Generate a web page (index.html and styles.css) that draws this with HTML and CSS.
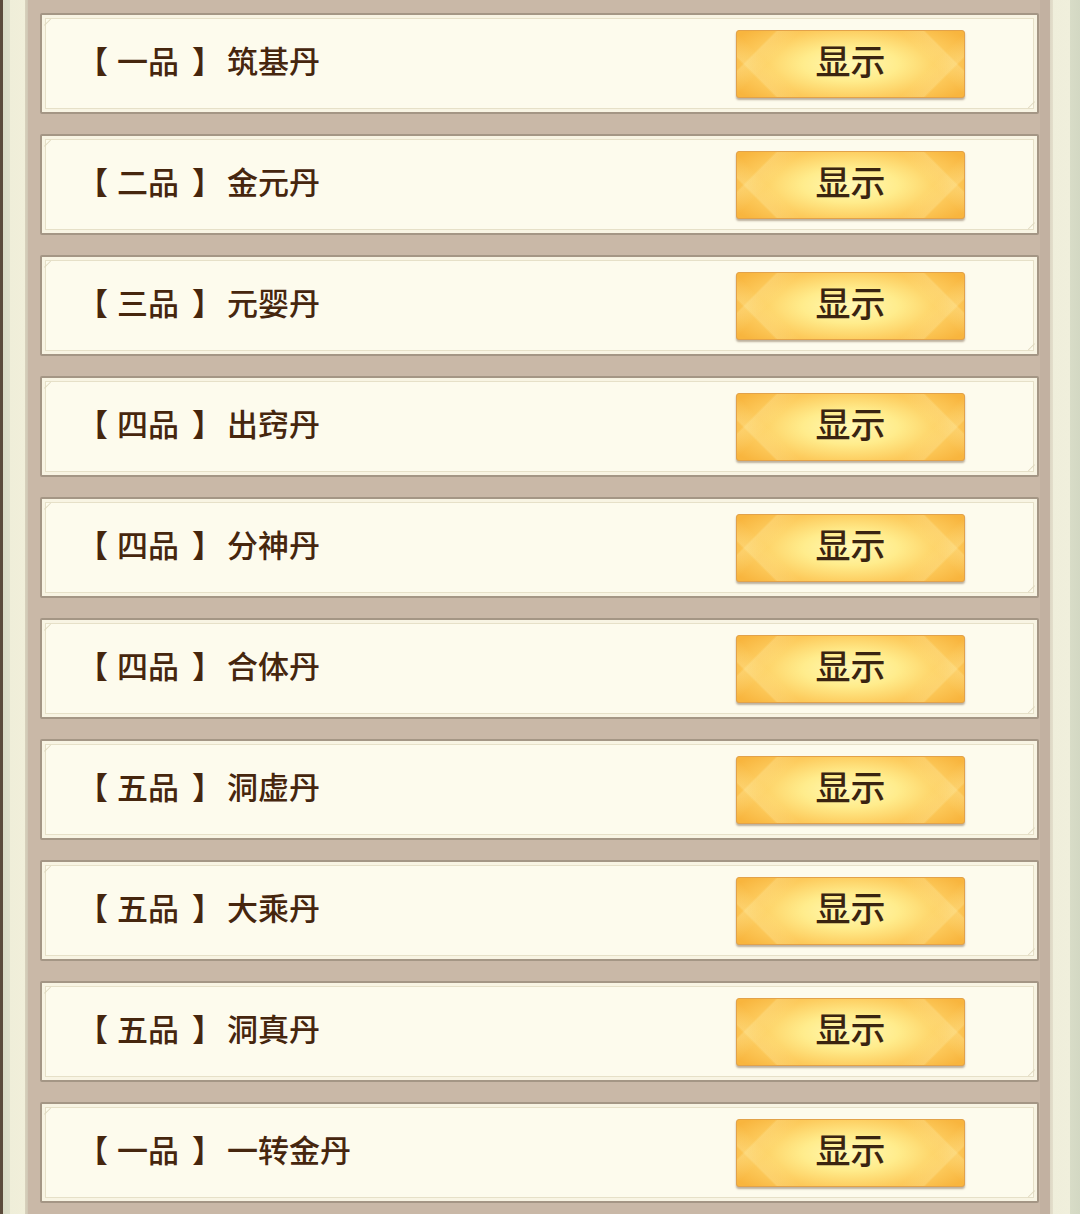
FILE: index.html
```html
<!DOCTYPE html>
<html lang="zh">
<head>
<meta charset="utf-8">
<link rel="stylesheet" href="styles.css">
</head>
<body>
<div class="frame">
  <div class="edge edge-left"></div>
  <div class="list">
    <div class="row"><div class="label"><span class="br">【</span><span class="q">一品</span><span class="br">】</span><span class="name">筑基丹</span></div><div class="btn"><span class="btn-text">显示</span></div></div>
    <div class="row"><div class="label"><span class="br">【</span><span class="q">二品</span><span class="br">】</span><span class="name">金元丹</span></div><div class="btn"><span class="btn-text">显示</span></div></div>
    <div class="row"><div class="label"><span class="br">【</span><span class="q">三品</span><span class="br">】</span><span class="name">元婴丹</span></div><div class="btn"><span class="btn-text">显示</span></div></div>
    <div class="row"><div class="label"><span class="br">【</span><span class="q">四品</span><span class="br">】</span><span class="name">出窍丹</span></div><div class="btn"><span class="btn-text">显示</span></div></div>
    <div class="row"><div class="label"><span class="br">【</span><span class="q">四品</span><span class="br">】</span><span class="name">分神丹</span></div><div class="btn"><span class="btn-text">显示</span></div></div>
    <div class="row"><div class="label"><span class="br">【</span><span class="q">四品</span><span class="br">】</span><span class="name">合体丹</span></div><div class="btn"><span class="btn-text">显示</span></div></div>
    <div class="row"><div class="label"><span class="br">【</span><span class="q">五品</span><span class="br">】</span><span class="name">洞虚丹</span></div><div class="btn"><span class="btn-text">显示</span></div></div>
    <div class="row"><div class="label"><span class="br">【</span><span class="q">五品</span><span class="br">】</span><span class="name">大乘丹</span></div><div class="btn"><span class="btn-text">显示</span></div></div>
    <div class="row"><div class="label"><span class="br">【</span><span class="q">五品</span><span class="br">】</span><span class="name">洞真丹</span></div><div class="btn"><span class="btn-text">显示</span></div></div>
    <div class="row"><div class="label"><span class="br">【</span><span class="q">一品</span><span class="br">】</span><span class="name">一转金丹</span></div><div class="btn"><span class="btn-text">显示</span></div></div>
  </div>
  <div class="edge edge-right"></div>
</div>
</body>
</html>
```
FILE: styles.css
```css
html, body {
  margin: 0;
  padding: 0;
}
body {
  width: 1080px;
  height: 1214px;
  overflow: hidden;
  background: #c9b8a7;
  font-family: "Noto Sans CJK SC", "Noto Sans", sans-serif;
}
.frame {
  display: flex;
  height: 1214px;
}
.edge {
  flex: none;
  height: 100%;
}
.edge-left {
  width: 28px;
  background: linear-gradient(to right,
    #5b4b3c 0, #5b4b3c 3px,
    #d9dcc6 3px, #dfe0cb 10px,
    #efeed9 10px, #f1efda 25px,
    #d8d2bd 25px, #cfc6b3 28px);
}
.edge-right {
  width: 30px;
  background: linear-gradient(to right,
    #dcd6c4 0, #e4dfcc 3px,
    #efeedb 3px, #f0efdc 20px,
    #d8dcc7 20px, #d3d8c3 30px);
}
.list {
  flex: 1;
  display: flex;
  flex-direction: column;
  gap: 20px;
  padding: 13px 11px 0 12px;
  background: linear-gradient(to right, #c9b8a7 0, #c9b8a7 1012px, #c2b1a1 1012px);
}
.row {
  position: relative;
  height: 97px;
  flex: none;
  display: flex;
  align-items: center;
  justify-content: space-between;
  background: #fdfbed;
  border: 2px solid #a49685;
  border-radius: 2px;
  box-shadow: inset 0 0 0 3px #f8f4e3, inset 0 0 0 4px #e6e0c8;
  padding: 0 72px 0 35px;
}
.row::before, .row::after {
  content: "";
  position: absolute;
  width: 9px;
  height: 0;
  border-top: 1px solid #e0d9c0;
}
.row::before {
  left: 2px;
  top: 10px;
  transform: rotate(-45deg);
  transform-origin: left top;
}
.row::after {
  right: 2px;
  bottom: 10px;
  transform: rotate(-45deg);
  transform-origin: right bottom;
}
.label {
  display: flex;
  align-items: center;
  color: #46260e;
  font-size: 31px;
  font-weight: 500;
  line-height: 1;
  padding-bottom: 8px;
  white-space: nowrap;
}
.q {
  margin: 0 13px 0 9px;
}
.name {
  margin-left: 4px;
}
.btn {
  width: 227px;
  height: 66px;
  display: flex;
  align-items: center;
  justify-content: center;
  border: 1px solid #e2a24a;
  border-radius: 3px;
  box-shadow: 0 2px 2px rgba(110, 85, 60, 0.45);
  background:
    linear-gradient(135deg, transparent 0, transparent 13%, rgba(255,248,190,0.22) 14%, transparent 22%),
    linear-gradient(45deg, transparent 0, transparent 13%, rgba(255,248,190,0.22) 14%, transparent 22%),
    linear-gradient(225deg, transparent 0, transparent 13%, rgba(255,248,190,0.22) 14%, transparent 22%),
    linear-gradient(315deg, transparent 0, transparent 13%, rgba(255,248,190,0.22) 14%, transparent 22%),
    radial-gradient(ellipse 60% 75% at 50% 50%, #fff8b4 0%, #ffec8c 35%, #fdcc5e 70%, #f8b53e 100%),
    #f7ad36;
}
.btn-text {
  color: #3a2410;
  font-size: 35px;
  font-weight: 500;
  line-height: 1;
  padding-bottom: 8px;
}
```
